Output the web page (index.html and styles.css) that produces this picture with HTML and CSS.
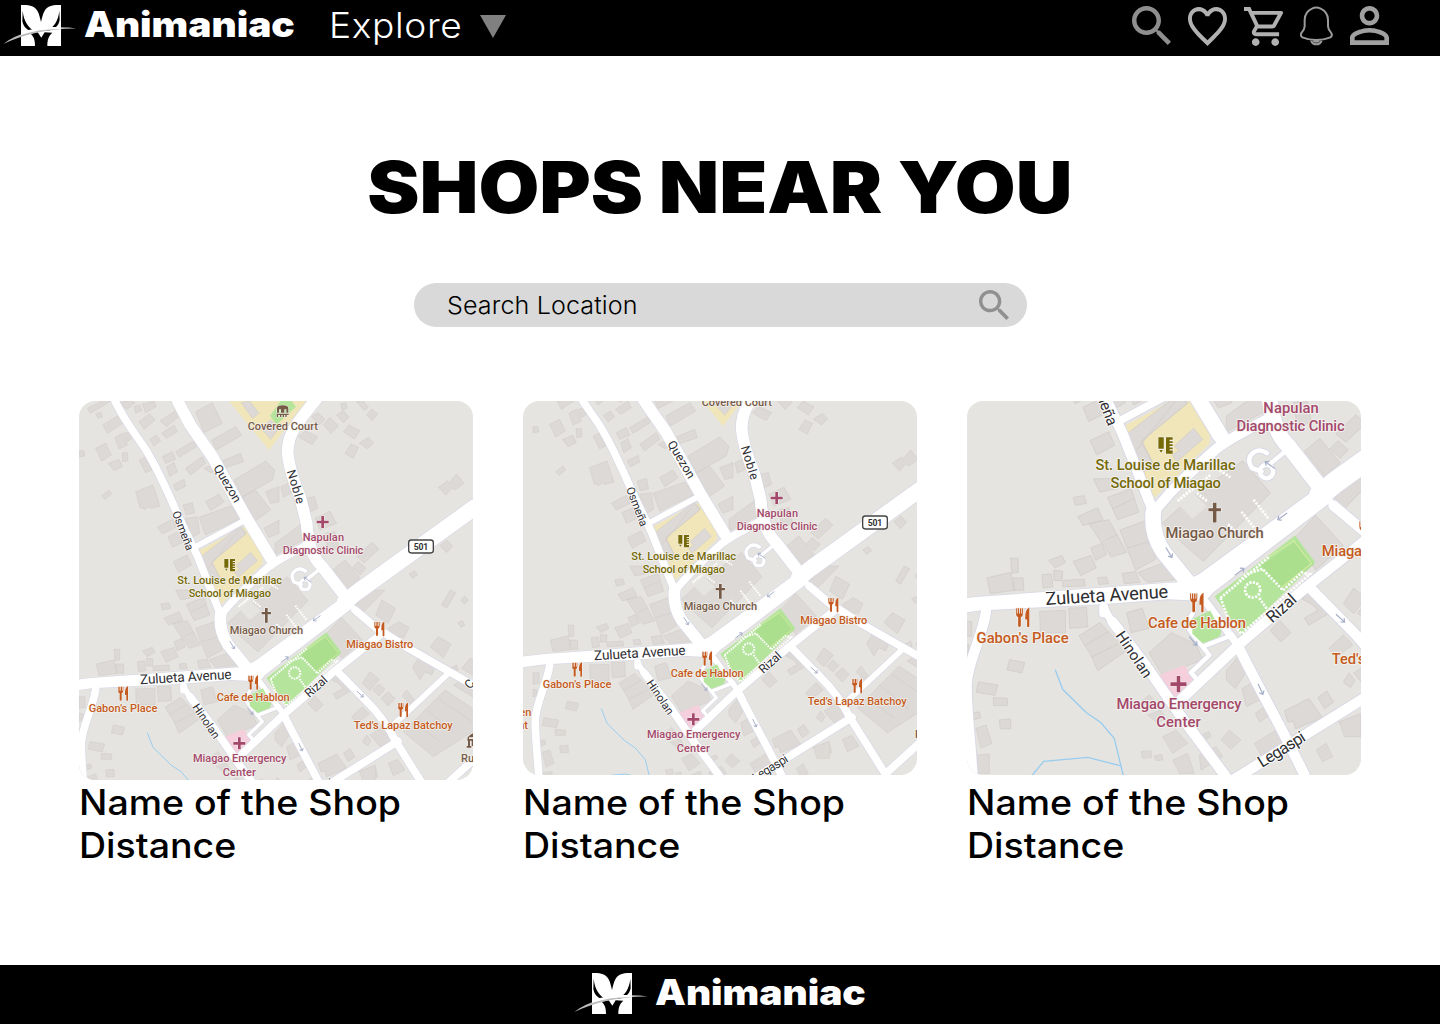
FILE: index.html
```html
<!DOCTYPE html>
<html lang="en">
<head>
<meta charset="utf-8">
<title>Animaniac - Shops near you</title>
<link rel="stylesheet" href="styles.css">
</head>
<body>
<svg class="defs" width="0" height="0" aria-hidden="true">
  <defs>
    <symbol id="logo" viewBox="9 12 228 129">
      <path fill="#fff" d="M63 15C88 14 103 17 112 32C118 42 120 54 123 66C126 54 128 42 134 32C143 17 158 14 183 15V138H142C142 118 146 108 157 98L134 97L124 113L113 97L92 101C103 112 105 122 105 138H63Z"/>
      <path fill="#000" d="M68 32C72 65 84 84 110 97C88 95 71 86 67 64ZM178 32C174 65 162 82 137 93C160 91 176 80 179 60Z"/>
      <path fill="#bbb" d="M10 132C60 92 150 72 235 86C155 84 68 104 10 132Z"/>
      <path fill="#fff" d="M63 97C100 84 150 78 183 82V87C140 86 100 92 63 105Z"/>
    </symbol>
    <symbol id="search" viewBox="3 3 17.49 17.49">
      <path d="M15.5 14h-.79l-.28-.27C15.41 12.59 16 11.11 16 9.5 16 5.91 13.09 3 9.5 3S3 5.91 3 9.5 5.91 16 9.5 16c1.61 0 3.09-.59 4.23-1.57l.27.28v.79l5 4.99L20.49 19l-4.99-5zm-6 0C7.01 14 5 11.99 5 9.5S7.01 5 9.5 5 14 7.01 14 9.5 11.99 14 9.5 14z"/>
    </symbol>
    <g id="fork">
      <path d="M-15 -21v11q0 7 5 9v20q3 4 6 0v-20q5-2 5-9v-11h-2v12h-2v-12h-3v12h-2v-12h-3v12h-2v-12zM14 -22q-9 4-8 26h4v16q2 3 5 0v-42z"/>
    </g>
    <path id="cross" d="M-4-18h8v14h14v8h-14v14h-8v-14h-14v-8h14z"/>
    <path id="arrow" d="M-14 0H12M5-6L12 0L5 6"/>
    <path id="r-lane" d="M546 799Q532 820 538 836L568 874L635 848M568 874L583 893L542 932L561 954M758 433L716 467M712 441Q697 431 684 438Q664 452 678 474L700 482"/>
    <path id="r-small" d="M383 368L531 289M576 775L650 875M981 898L1141 748M348 785Q352 802 368 820M345 785V800"/>
    <path id="r-mid" d="M141-69C175 0 210 40 235 80S300 205 323 258S370 355 390 400L455 565M366 818L440 915L516 1025L620 1165M520 992L651 868L801 740L935 634M861 558L925 612L1020 672L1135 738L1220 786M808 742L890 826C935 870 960 905 985 955L1095 1130M650 878C690 960 740 1045 796 1161M990 952L800 1070L673 1150L640 1170M1090 1122L1220 1004M83 796C75 850 42 910 40 956S47 1068 53 1165M462 568C510 510 550 475 600 430Q630 407 700 372L730 355"/>
    <path id="r-large" d="M329-69L367 3L433 98L533 278L608 402M745-75Q700-20 682 8Q658 45 659 88Q665 145 696 218L716 298Q722 390 760 425L835 522M458 570Q452 620 480 662L545 742"/>
    <path id="r-main" d="M1220 250L865 506L830 535"/>
    <path id="r-avenue" d="M0 770L60 763L525 729L560 712L812 528L862 545L590 754L575 772L490 768L340 779L70 793L0 802Z"/>

    <g id="town">
      <path class="land" d="M0-80H1230V1180H0Z"/>
      <path class="yellow" d="M483-69L603 78L715-69ZM390 382L535 305L580 378Q586 388 583 420L455 545L440 515Z"/>
      <path class="green" d="M606-25L640-72H668L684-52L625 2Z"/>
      <g class="building">
        <path transform="translate(33 -72)" d="M25 25L75 0L95 3L35 40ZM50 42L65 37L70 50L57 55ZM72 75L120 45L138 65L85 100ZM108 112L130 100L145 135L120 147ZM135 100L150 97L160 115L145 125ZM50 145L80 130L97 165L68 183ZM0 152L15 152L17 168L0 170ZM88 190L120 178L130 200L105 212ZM130 158L145 158L147 182L131 185ZM120 10L150 0L168 8L145 28ZM165 20L182 15L188 32L170 38ZM190 12L225 3L232 20L200 38ZM180 65L212 42L228 60L195 88ZM243 62L295 30L305 45L262 80ZM248 100L285 75L295 95L262 115ZM212 118L232 105L245 122L225 138ZM250 170L280 155L290 178L260 190ZM290 155L345 122L352 140L300 172ZM263 200L285 188L295 215L272 230ZM320 205L370 170L380 190L335 225ZM282 255L315 238L320 258L292 272ZM180 180L200 170L218 210L200 218ZM68 287L90 270L98 282L78 298ZM170 275L222 255L243 318L215 325L212 318L198 328L183 322ZM350 35L400 8L430 70L375 98ZM398 120L470 80L488 105L412 150ZM375 205L485 160L493 185L395 218ZM465 240L560 183L588 210L580 240L490 290ZM490 290L530 270L575 330L525 365ZM380 305L420 282L435 305L395 332ZM360 352L455 318L485 355L380 405ZM312 315L340 308L347 338L322 345ZM320 355L355 350L362 400L335 415ZM235 382L280 358L295 380L250 402ZM267 410L300 395L315 425L280 442ZM283 485L325 465L338 495L298 517ZM560 275L600 260V305L575 310ZM555 385L600 360V400L570 412ZM487 8L512 3L540 40L520 55ZM545 85L575 60L600 85L575 118Z"/>
        <path transform="translate(621 -72)" d="M70 110L92 92L128 110L112 133L95 125ZM145 75L165 52L190 78L168 100ZM110 50L128 38L150 58L132 75ZM185 45L205 32L222 52L205 68ZM197 12L212 8L217 24L202 30ZM245 5L262 0L280 22L268 32ZM275 45L290 27L308 42L292 62ZM205 95L222 75L255 92L238 117ZM210 160L228 132L250 142L235 175ZM253 130L280 112L296 128L278 147ZM490 262L517 243L522 248L545 222L567 250L540 270L530 265L512 285ZM495 437L515 420L533 438L515 458ZM402 522L418 512L428 524L413 535ZM120 355L165 333L185 370L135 390ZM92 295L118 290L128 325L105 335ZM18 260L40 250L48 280L25 292ZM0 430L75 375L85 420L0 465ZM245 470L290 427L312 447L268 488ZM232 503L250 485L273 505L255 525ZM175 508L210 480L255 535L220 565ZM150 400L180 395L190 440L160 460Z"/>
        <path transform="translate(33 498)" d="M245 42L270 38L275 55L250 60ZM255 85L300 65L312 92L268 105ZM322 42L375 22L392 75L345 92ZM333 67L382 45M290 0L330 0L345 22L305 30ZM280 100L325 92L365 165L330 175ZM318 137L345 125M285 155L308 145L320 170L295 183ZM350 115L405 95L430 180L385 205ZM367 155L420 140M245 185L285 172L297 200L262 217ZM190 183L220 172L228 187L205 200ZM105 178L122 178V210L108 212ZM52 222L105 210L115 250L60 257ZM110 222L133 222L135 250L112 250ZM175 215L196 213L200 242L178 245ZM202 205L222 207L220 228L202 228ZM222 228L270 225L272 240L222 242ZM300 222L320 220L325 235L303 237ZM355 212L385 208L395 232L360 235ZM390 210L450 188L485 225L410 232ZM170 297L228 295V345L172 345ZM235 290L275 288L278 332L238 335ZM258 352L305 322L365 385L300 430L285 395ZM270 375L325 342M285 400L350 368M365 300L400 290L415 335L375 345ZM415 390L465 345L520 370L535 405L445 440ZM0 320L18 320V352L0 355ZM0 370L12 372L10 390L0 392ZM103 405L137 412L130 435L97 428ZM33 455L77 462L70 485L28 478ZM66 490L98 492V508L67 508ZM80 540L105 538L106 560L82 560ZM20 525L35 522L38 535L22 540Z"/>
        <path transform="translate(621 498)" d="M155 130L200 82L262 150L200 205ZM240 45L290 0L330 0L262 70ZM302 75L320 30L362 55L340 100ZM340 115L372 95L402 112L388 142L360 138ZM500 45L525 0L542 8L515 55ZM557 30L570 18L580 32L568 42ZM548 98L562 92L570 105L558 112ZM465 170L490 140L528 162L505 203ZM413 232L430 205L480 232L470 255L450 245L435 270ZM262 280L285 245L313 268L285 302ZM293 300L312 282L330 298L312 318ZM318 325L340 305L360 325L340 348ZM382 318L395 300L418 330L405 342ZM170 270L185 250L212 280L232 300L185 328L175 312L205 295L190 280ZM98 340L120 318L145 345L122 365ZM230 380L262 350L283 372L245 400ZM262 455L275 435L288 452L278 468ZM285 435L325 410L352 455L315 470ZM205 490L225 475L240 500L220 515ZM130 520L185 492L215 535L155 560L150 543L138 545ZM340 520L368 508L390 540L355 557ZM252 545L300 527L308 560L275 575ZM385 425L510 300L600 360V420L475 500ZM420 400L495 455M455 360L540 430M490 325L590 395M560 235L585 205L600 210V260ZM525 235L545 225L550 240L535 250ZM0 430L25 400L50 425L20 470L0 450ZM35 470L70 450L85 490L45 510ZM65 525L85 512L95 530L75 545ZM535 285L555 272L600 300V325Z"/>
        <path transform="translate(38.3 321.9) scale(.7463)" d="M30 985L60 975L78 1030L45 1045ZM33 1065L70 1062V1120L33 1120ZM525 1055L555 1052L557 1072L530 1075ZM565 1068L588 1063L590 1080L570 1082ZM590 1010L630 990L665 1030L620 1060ZM620 1080L665 1060L685 1120L640 1120ZM700 1065L750 1040L770 1070L705 1110ZM765 1020L790 990L825 1020L795 1048ZM865 1030L930 990L955 1040L890 1075ZM1050 1050L1080 1030L1100 1070L1070 1085ZM1120 965L1185 940V1010L1135 1010ZM690 1010L730 995L735 1010L700 1030ZM525 905L550 885L580 920L560 930ZM545 945L585 930L600 960L570 965Z"/>
        <path d="M400 460L520 308L535 328L430 415L458 465L430 490L393 402ZM398 398L515 308L533 330L432 413L455 460L428 480ZM505 425L548 385L568 410L510 460L500 445L515 435ZM478 598L535 545L658 458L720 530L570 683L520 640Z"/>
      </g>
      <path class="land" d="M508 550L540 524L578 560L545 588Z"/>
      <path class="pink" d="M471 938L527 915L557 956L516 996L494 986Z"/>
      <path class="river" d="M238 926L255 970L308 1022L340 1044L370 1079L391 1165M385 1141L311 1122L212 1131L184 1165"/>

      <g class="casing">
        <use href="#r-lane" stroke-width="14"/><use href="#r-small" stroke-width="21"/><use href="#r-mid" stroke-width="27"/><use href="#r-large" stroke-width="39"/><use href="#r-main" stroke-width="52"/><use href="#r-avenue" stroke-width="4"/><circle cx="711" cy="482" r="15" stroke-width="14"/>
      </g>
      <g class="road">
        <use href="#r-lane" stroke-width="10"/><use href="#r-small" stroke-width="17"/><use href="#r-mid" stroke-width="23"/><use href="#r-large" stroke-width="35"/><use href="#r-main" stroke-width="48"/><use href="#r-avenue" class="solid"/><circle cx="711" cy="482" r="15" stroke-width="10"/>
      </g>
      <path class="green" d="M595 762L775 625L820 685L655 848ZM546 812L585 793L610 840L606 852L568 867L545 845Z"/>
      <path class="pitch" d="M700 692L778 637L817 690L742 750Z"/>
      <path class="pitch-line" d="M712 676L772 637L812 688L745 741"/>
      <g class="footpath">
        <path d="M608 765L718 672M608 765L625 810L655 845L808 712L790 708L748 748L702 700L665 712L650 728M695 765L712 790M512 548L542 522M555 530L580 550M585 490L512 548M682 545L716 588M655 572L685 610M625 600L645 620M600 475L630 495"/>
        <circle cx="680" cy="747" r="17"/>
      </g>
      <g class="arrows">
        <use href="#arrow" transform="translate(746 583) rotate(144)"/><use href="#arrow" transform="translate(651 706) rotate(-37)"/><use href="#arrow" transform="translate(493 664) rotate(58)"/><use href="#arrow" transform="translate(547 862) rotate(48)"/><use href="#arrow" transform="translate(877 811) rotate(42)"/><use href="#arrow" transform="translate(698 970) rotate(65)"/><use href="#arrow" transform="translate(718 467) rotate(-145)"/>
      </g>

      <g class="street">
        <text transform="translate(435 131) rotate(59)" textLength="126">Quezon</text>
        <text transform="translate(312 266) rotate(69)" textLength="124" class="fine">Osmeña</text>
        <text transform="translate(656 142) rotate(73)" textLength="104">Noble</text>
        <text transform="translate(217 781) rotate(-3.5)" textLength="275" class="wide">Zulueta Avenue</text>
        <text transform="translate(372 849) rotate(56)" textLength="118" class="fine">Hinolan</text>
        <text transform="translate(724 823) rotate(-42)" textLength="77">Rizal</text>
        <text transform="translate(701 1146) rotate(-32)" textLength="118">Legaspi</text>
        <text transform="translate(1206 797) rotate(-50)">C</text>
      </g>
      <g class="place orange">
        <text x="62" y="865" textLength="206">Gabon's Place</text>
        <text x="446" y="832" textLength="219">Cafe de Hablon</text>
        <text x="835" y="671" textLength="201">Miagao Bistro</text>
        <text x="857" y="914" textLength="297">Ted's Lapaz Batchoy</text>
        <text x="28" y="947" text-anchor="end">Garden</text>
        <text x="18" y="987" text-anchor="end">Restaurant</text>
        <use href="#fork" x="165" y="809"/><use href="#fork" x="555" y="776"/><use href="#fork" x="934" y="615"/><use href="#fork" x="1005" y="858"/>
      </g>
      <g class="place rose">
        <text x="704" y="350" textLength="124">Napulan</text>
        <text x="644" y="391" textLength="242">Diagnostic Clinic</text>
        <text x="375" y="1014" textLength="280">Miagao Emergency</text>
        <text x="464" y="1055" textLength="100">Center</text>
        <use href="#cross" x="764" y="294"/><use href="#cross" x="514" y="958"/>
      </g>
      <g class="place olive">
        <text x="328" y="479" textLength="314">St. Louise de Marillac</text>
        <text x="362" y="520" textLength="247">School of Miagao</text>
        <path d="M469 405h12v26h-12zM471 434h8l-4 6zM486 405h15v6h-7v3h7v4h-7v3h7v4h-7v3h7v4h-7v3h7v7h-15z"/>
      </g>
      <g class="place brown">
        <text x="485" y="631" textLength="220">Miagao Church</text>
        <text x="539" y="18" textLength="211">Covered Court</text>
        <text x="1179" y="1013">Ruins</text>
        <path d="M591 552h8v12h10v7h-10v25h-8v-25h-10v-7h10zM627-34v-13q0-9 17-9t17 9v13h-6v-10h-6v10h-10v-10h-6v10zM626-31h36v4h-6v6h-4v-6h-4v6h-4v-6h-4v6h-4v-6h-6v6h-4zM1199 940q14-14 24-14v14h-20v5h18v5h-5v16h-5v-16h-5v16h4v5h-14v-5h4v-16h-2z"/>
      </g>
      <rect class="shield" x="1022" y="348" width="74" height="39" rx="8"/>
      <text class="shield-text" x="1059" y="377" text-anchor="middle" textLength="44">501</text>
    </g>
  </defs>
</svg>

<header class="topbar">
  <a class="brand"><svg class="brand-mark"><use href="#logo"/></svg><span class="brand-name">Animaniac</span></a>
  <nav class="menu"><span class="menu-label">Explore</span><span class="caret"></span></nav>
  <div class="actions">
    <svg class="icon dark" viewBox="0 0 39 39"><use href="#search" width="39" height="39"/></svg>
    <svg class="icon" viewBox="2 3 20 18.35" preserveAspectRatio="none"><path d="M16.5 3c-1.74 0-3.41.81-4.5 2.09C10.91 3.81 9.24 3 7.5 3 4.42 3 2 5.42 2 8.5c0 3.78 3.4 6.86 8.55 11.54L12 21.35l1.45-1.32C18.6 15.36 22 12.28 22 8.5 22 5.42 19.58 3 16.5 3zm-4.4 15.55l-.1.1-.1-.1C7.14 14.24 4 11.39 4 8.5 4 6.5 5.5 5 7.5 5c1.54 0 3.04.99 3.57 2.36h1.87C13.46 5.99 14.96 5 16.5 5c2 0 3.5 1.5 3.5 3.5 0 2.89-3.14 5.74-7.9 10.05z"/></svg>
    <svg class="icon" viewBox="1 2 20 20"><path d="M15.55 13c.75 0 1.41-.41 1.75-1.03l3.58-6.49A.996.996 0 0 0 20.01 4H5.21l-.94-2H1v2h2l3.6 7.59-1.35 2.44C4.52 15.37 5.48 17 7 17h12v-2H7l1.1-2h7.45zM6.16 6h12.15l-2.76 5H8.53L6.16 6zM7 18c-1.1 0-1.99.9-1.99 2S5.9 22 7 22s2-.9 2-2-.9-2-2-2zm10 0c-1.1 0-1.99.9-1.99 2s.89 2 1.99 2 2-.9 2-2-.9-2-2-2z"/></svg>
    <svg class="icon bell" viewBox="540 20 99 118"><path d="M576 27Q589 20 602 27Q623 36 624 60V80Q625 91 633 99Q639 107 631 113Q612 121 589 121T547 113Q539 107 545 99Q553 91 554 80V60Q555 36 576 27ZM573 122Q577 134 589 134T605 122M580 123Q589 129 598 123"/></svg>
    <svg class="icon person" viewBox="4 4 16 16"><path d="M12 5.9c1.16 0 2.1.94 2.1 2.1s-.94 2.1-2.1 2.1S9.9 9.16 9.9 8s.94-2.1 2.1-2.1m0 9c2.97 0 6.1 1.46 6.1 2.1v1.1H5.9V17c0-.64 3.13-2.1 6.1-2.1M12 4C9.79 4 8 5.79 8 8s1.79 4 4 4 4-1.79 4-4-1.79-4-4-4zm0 9c-2.67 0-8 1.34-8 4v3h16v-3c0-2.66-5.33-4-8-4z"/></svg>
  </div>
</header>

<main class="content">
  <h1 class="title"><span class="title-text">SHOPS NEAR YOU</span></h1>
  <div class="searchbox"><span class="search-text">Search Location</span><svg class="search-icon"><use href="#search"/></svg></div>
  <section class="shops">
    <article class="shop">
      <div class="map-slot"><svg class="map tall" viewBox="33 -69 1182 1137"><use href="#town"/></svg></div>
      <p class="shop-line"><span class="name">Name of the Shop</span></p>
      <p class="shop-line"><span class="distance">Distance</span></p>
    </article>
    <article class="shop">
      <div class="map-slot"><svg class="map" viewBox="3 3 1182 1122"><use href="#town"/></svg></div>
      <p class="shop-line"><span class="name">Name of the Shop</span></p>
      <p class="shop-line"><span class="distance">Distance</span></p>
    </article>
    <article class="shop">
      <div class="map-slot"><svg class="map" viewBox="40.5 324.1 882.1 837.3"><use href="#town"/></svg></div>
      <p class="shop-line"><span class="name">Name of the Shop</span></p>
      <p class="shop-line"><span class="distance">Distance</span></p>
    </article>
  </section>
</main>

<footer class="footer">
  <a class="brand"><svg class="brand-mark"><use href="#logo"/></svg><span class="brand-name">Animaniac</span></a>
</footer>
</body>
</html>
```
FILE: styles.css
```css
* { box-sizing: border-box; }
body {
  margin: 0;
  min-height: 1024px;
  display: flex;
  flex-direction: column;
  background: #fff;
  color: #000;
  font-family: Inter, "Open Sans", sans-serif;
}
svg { display: block; flex: none; }
.defs { height: 0; width: 0; overflow: hidden; }

.topbar {
  height: 56px;
  background: #000;
  color: #fff;
  display: flex;
  align-items: flex-start;
  padding-left: 3px;
}
.brand { display: flex; height: 51px; width: 292px; padding-top: 4px; gap: 5px; }
.brand-mark { width: 76px; height: 43px; }
.brand-name {
  font-size: 35px;
  font-weight: 900;
  line-height: 41px;
  color: #fff;
  transform-origin: left;
  white-space: nowrap;
  transform: scaleX(1.11);
}
.menu { display: flex; margin-left: 34px; }
.menu-label {
  width: 151px;
  font-size: 35px;
  font-weight: 300;
  line-height: 51px;
  letter-spacing: .6px;
}
.menu-label { transform: scaleX(1.06); transform-origin: left; }
.caret {
  width: 26px;
  height: 23px;
  margin-top: 15px;
  background: #808080;
  clip-path: polygon(0 0, 100% 0, 50% 100%);
}
.actions { display: flex; margin: 6px 51px 0 auto; gap: 17px; }
.icon { width: 39px; height: 39px; fill: #b1b1b1; }
.icon.dark { fill: #8e8e8e; }
.icon.person { fill: #a0a0a0; }
.icon.bell { width: 33px; height: 40px; fill: none; stroke: #9a9a9a; stroke-width: 6; }
.icon + .icon:nth-child(2) { margin-top: 1px; }
.icon:nth-child(3) { margin-top: 1px; }

.content { flex: 1; }
.title {
  margin: 96px 0 0;
  height: 71px;
  display: flex;
  justify-content: center;
  font-size: 71px;
  font-weight: 900;
  line-height: 71px;
  white-space: nowrap;
}
.title-text { transform: scaleX(1.106); }
.searchbox {
  width: 613px;
  height: 44px;
  margin: 60px auto 0;
  padding: 0 18px 0 33px;
  border-radius: 22px;
  background: #d9d9d9;
  display: flex;
  align-items: center;
  justify-content: space-between;
}
.search-text {
  font-size: 24px;
  font-weight: 300;
  letter-spacing: .1px;
  transform: scaleX(1.046);
  transform-origin: left;
}
.search-icon { width: 30px; height: 30px; fill: #909090; }

.shops { display: grid; grid-template-columns: repeat(3, 394px); gap: 50px; padding: 74px 79px 0; }
.map-slot { height: 380px; }
.map { width: 394px; height: 374px; border-radius: 16px; }
.map.tall { height: 379px; }
.shop-line {
  margin: 0;
  font-size: 35px;
  font-weight: 500;
  line-height: 43px;
  white-space: nowrap;
}
.shop-line span { display: inline-block; transform-origin: left; transform: scaleX(1.072); }

.footer { height: 59px; background: #000; display: flex; justify-content: center; padding-top: 4px; }
.footer .brand { padding-top: 3px; }

.land { fill: #e5e4e0; }
.yellow { fill: #f0e6b9; }
.green { fill: #b5e59c; }
.pink { fill: #f5cfdc; }
.building { fill: #dcd9d6; stroke: #d1cbc8; stroke-width: 1.6; }
.river { fill: none; stroke: #99cdf0; stroke-width: 3; }
.casing { fill: none; stroke: #d8d8e6; stroke-linejoin: round; stroke-linecap: round; }
.road { fill: none; stroke: #fff; stroke-linejoin: round; stroke-linecap: round; }
.solid { fill: #fff; stroke: none; }
.pitch { fill: #abdf8e; }
.pitch-line { fill: none; stroke: #cfeaa0; stroke-width: 3; }
.footpath { fill: none; stroke: #fff; stroke-width: 6; stroke-dasharray: 5 3; }
.arrows { fill: none; stroke: #a5aec8; stroke-width: 2.6; }
.street, .place { font-family: Roboto, sans-serif; font-size: 33px; stroke-linejoin: round; }
.street text, .place text { paint-order: stroke; }
.street { font-size: 37px; fill: #2f2f33; stroke: #fff; stroke-width: 4; }
.street .fine { font-size: 34px; }
.street .wide { font-size: 41px; }
.place { font-weight: 500; stroke: #f4f2ee; stroke-width: 4; }
.place path, .place use { paint-order: stroke; stroke-width: 3; }
.orange { fill: #c55a20; }
.rose { fill: #a3486b; }
.olive { fill: #766a08; }
.brown { fill: #765a48; }
.shield { fill: #fff; stroke: #444; stroke-width: 4; }
.shield-text { fill: #333; font: 700 26px Roboto, sans-serif; }
```
